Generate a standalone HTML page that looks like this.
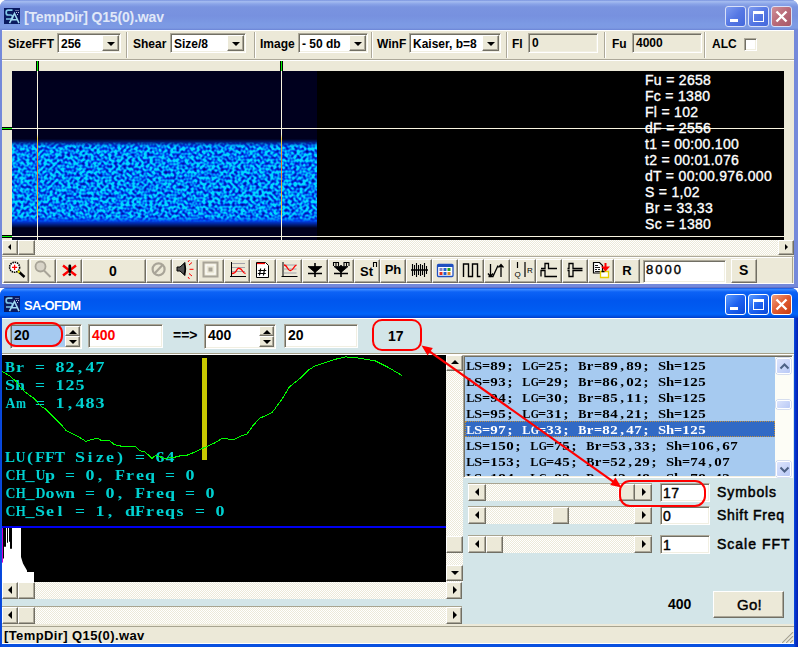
<!DOCTYPE html>
<html><head><meta charset="utf-8"><style>
*{margin:0;padding:0;box-sizing:border-box}
html,body{width:798px;height:647px;overflow:hidden;background:#fff;font-family:"Liberation Sans",sans-serif}
div{position:absolute}
.t{white-space:pre;line-height:1}
.b{font-weight:bold}
.btn{background:#ECE9D8;border-style:solid;border-width:1px;border-color:#fff #716F64 #716F64 #fff;box-shadow:inset -1px -1px #ACA899}
.sunk{border-style:solid;border-width:1px;border-color:#ACA899 #fff #fff #ACA899;box-shadow:inset 1px 1px #716F64, inset -1px -1px #F1EFE2}
.edit{background:#fff}
.dither{background-color:#F4F3EE}
.sepv{width:2px;border-left:1px solid #ACA899;border-right:1px solid #fff}
</style></head>
<body>
<div class="" style="left:0px;top:0px;width:798px;height:288px;background:#7489DA;border-radius:7px 7px 0 0"></div>
<div class="" style="left:0px;top:287px;width:798px;height:1px;background:#6070C8"></div>
<div class="" style="left:0px;top:0px;width:798px;height:30px;border-radius:7px 7px 0 0;background:linear-gradient(#6a85d8 0px,#a3baf0 1px,#a0b8ee 2px,#8aa4e8 4px,#7a94e0 7px,#7791df 16px,#7c9ae4 24px,#7d9ae3 28px,#6b84d6 30px)"></div>
<div style="left:4px;top:8px;width:16px;height:16px;background:#0a1a60"><svg width="16" height="16" viewBox="0 0 16 16"><path d="M8.5 2.2H4.2Q2.2 2.2 2.2 4.2V5Q2.2 7 4.2 7H6.5Q8.5 7 8.5 9V9.2Q8.5 11 6.5 11H2" stroke="#80C8E8" stroke-width="1.7" fill="none"/><path d="M5.5 15.2L10.5 5.5L15 15.2M7.5 11.8H13.2" stroke="#A0D8F0" stroke-width="1.6" fill="none"/><path d="M11.5 2.5h1M13.5 2.5h1M12 4.5h1M14 4.5h1M13 6.5h1" stroke="#C0C0E0" stroke-width="1"/></svg></div>
<div class="t" style="left:24px;top:10px;font-size:14px;color:#E0E8F8;font-weight:bold;letter-spacing:-0.15px">[TempDir] Q15(0).wav</div>
<div style="left:725px;top:6px;width:21px;height:21px;border:1px solid #D8E0F8;border-radius:3px;background:linear-gradient(135deg,#7e9cf0,#5678e4 50%,#4468dc)"><div style="left:4px;top:12px;width:8px;height:3px;background:#fff"></div></div>
<div style="left:748px;top:6px;width:21px;height:21px;border:1px solid #D8E0F8;border-radius:3px;background:linear-gradient(135deg,#7e9cf0,#5678e4 50%,#4468dc)"><div style="left:4px;top:4px;width:11px;height:11px;border:1px solid #fff;border-top-width:3px"></div></div>
<div style="left:771px;top:6px;width:21px;height:21px;border:1px solid #D8E0F8;border-radius:3px;background:linear-gradient(135deg,#d09098,#b86a78 50%,#a85868)"><svg style="position:absolute;left:0;top:0" width="19" height="19"><path d="M4.5 4.5L14.5 14.5M14.5 4.5L4.5 14.5" stroke="#fff" stroke-width="2.4"/></svg></div>
<div class="" style="left:2px;top:30px;width:792px;height:253px;background:#ECE9D8"></div>
<div class="" style="left:2px;top:30px;width:792px;height:1px;background:#fff"></div>
<div class="" style="left:2px;top:59px;width:792px;height:1px;background:#ACA899"></div>
<div class="" style="left:2px;top:60px;width:792px;height:1px;background:#fff"></div>
<div class="t" style="left:8px;top:38px;font-size:12px;color:#000;font-weight:bold">SizeFFT</div>
<div class="sunk edit" style="left:57px;top:33px;width:64px;height:20px"></div>
<div class="t" style="left:61px;top:38px;font-size:12px;color:#000;font-weight:bold">256</div>
<div class="btn" style="left:102px;top:35px;width:17px;height:16px"><div style="left:4px;top:6px;width:0;height:0;border-left:4px solid transparent;border-right:4px solid transparent;border-top:4px solid #000"></div></div>
<div class="sepv" style="left:126px;top:32px;height:26px"></div>
<div class="t" style="left:133px;top:38px;font-size:12px;color:#000;font-weight:bold">Shear</div>
<div class="sunk edit" style="left:170px;top:33px;width:76px;height:20px"></div>
<div class="t" style="left:174px;top:38px;font-size:12px;color:#000;font-weight:bold">Size/8</div>
<div class="btn" style="left:227px;top:35px;width:17px;height:16px"><div style="left:4px;top:6px;width:0;height:0;border-left:4px solid transparent;border-right:4px solid transparent;border-top:4px solid #000"></div></div>
<div class="sepv" style="left:254px;top:32px;height:26px"></div>
<div class="t" style="left:260px;top:38px;font-size:12px;color:#000;font-weight:bold">Image</div>
<div class="sunk edit" style="left:298px;top:33px;width:70px;height:20px"></div>
<div class="t" style="left:302px;top:38px;font-size:12px;color:#000;font-weight:bold">- 50 db</div>
<div class="btn" style="left:349px;top:35px;width:17px;height:16px"><div style="left:4px;top:6px;width:0;height:0;border-left:4px solid transparent;border-right:4px solid transparent;border-top:4px solid #000"></div></div>
<div class="sepv" style="left:371px;top:32px;height:26px"></div>
<div class="t" style="left:377px;top:38px;font-size:12px;color:#000;font-weight:bold">WinF</div>
<div class="sunk edit" style="left:409px;top:33px;width:92px;height:20px"></div>
<div class="t" style="left:413px;top:38px;font-size:12px;color:#000;font-weight:bold">Kaiser, b=8</div>
<div class="btn" style="left:482px;top:35px;width:17px;height:16px"><div style="left:4px;top:6px;width:0;height:0;border-left:4px solid transparent;border-right:4px solid transparent;border-top:4px solid #000"></div></div>
<div class="sepv" style="left:506px;top:32px;height:26px"></div>
<div class="t" style="left:512px;top:38px;font-size:12px;color:#000;font-weight:bold">Fl</div>
<div class="sunk" style="left:528px;top:33px;width:70px;height:20px;background:#ECE9D8"></div>
<div class="t" style="left:532px;top:37px;font-size:12px;color:#000;font-weight:bold">0</div>
<div class="sepv" style="left:604px;top:32px;height:26px"></div>
<div class="t" style="left:612px;top:38px;font-size:12px;color:#000;font-weight:bold">Fu</div>
<div class="sunk" style="left:632px;top:33px;width:70px;height:20px;background:#ECE9D8"></div>
<div class="t" style="left:636px;top:37px;font-size:12px;color:#000;font-weight:bold">4000</div>
<div class="sepv" style="left:704px;top:32px;height:26px"></div>
<div class="t" style="left:712px;top:38px;font-size:12px;color:#000;font-weight:bold">ALC</div>
<div class="sunk edit" style="left:744px;top:38px;width:13px;height:13px"></div>
<div class="" style="left:12px;top:71px;width:772px;height:169px;background:#000"></div>
<div class="" style="left:12px;top:71px;width:305px;height:169px;background:#00001e"></div>
<svg style="position:absolute;left:12px;top:139px" width="305" height="89">
<defs>
<filter id="nzc" x="0" y="0" width="100%" height="100%" color-interpolation-filters="sRGB">
<feTurbulence type="fractalNoise" baseFrequency="0.34" numOctaves="1" seed="7"/>
<feColorMatrix type="matrix" values="0 0 0 0 0  0 0 0 0 0.85  0 0 0 0 1  4.5 0 0 0 -1.85"/>
</filter>
<filter id="nzd" x="0" y="0" width="100%" height="100%" color-interpolation-filters="sRGB">
<feTurbulence type="fractalNoise" baseFrequency="0.34" numOctaves="1" seed="7"/>
<feColorMatrix type="matrix" values="0 0 0 0 0  0 0 0 0 0.05  0 0 0 0 0.55  -4.5 0 0 0 1.9"/>
</filter>
<linearGradient id="vg" x1="0" y1="0" x2="0" y2="1">
<stop offset="0" stop-color="#fff" stop-opacity="0"/>
<stop offset="0.08" stop-color="#fff" stop-opacity="1"/>
<stop offset="0.92" stop-color="#fff" stop-opacity="1"/>
<stop offset="1" stop-color="#fff" stop-opacity="0"/>
</linearGradient>
<linearGradient id="vg2" x1="0" y1="0" x2="0" y2="1">
<stop offset="0.03" stop-color="#fff" stop-opacity="0"/>
<stop offset="0.09" stop-color="#fff" stop-opacity="1"/>
<stop offset="0.875" stop-color="#fff" stop-opacity="1"/>
<stop offset="0.935" stop-color="#fff" stop-opacity="0"/>
</linearGradient>
<mask id="vm"><rect width="305" height="89" fill="url(#vg)"/></mask>
<mask id="vm2"><rect width="305" height="89" fill="url(#vg2)"/></mask>
</defs>
<rect width="305" height="89" fill="#0040F0" mask="url(#vm)"/>
<g mask="url(#vm2)"><rect width="305" height="89" filter="url(#nzd)"/><rect width="305" height="89" filter="url(#nzc)"/></g>
</svg>
<div class="" style="left:36px;top:61px;width:3px;height:10px;background:#000"></div>
<div class="" style="left:280px;top:61px;width:3px;height:10px;background:#000"></div>
<div class="" style="left:37px;top:61px;width:1px;height:10px;background:#00F000"></div>
<div class="" style="left:281px;top:61px;width:1px;height:10px;background:#00F000"></div>
<div class="" style="left:37px;top:71px;width:1px;height:169px;background:linear-gradient(#F8F4E0 0,#F8F4E0 63px,#f0d040 68px,#f08030 90px,#f0c040 140px,#F8F4E0 152px)"></div>
<div class="" style="left:281px;top:71px;width:1px;height:169px;background:linear-gradient(#F8F4E0 0,#F8F4E0 63px,#f0d040 68px,#f08030 90px,#f0c040 140px,#F8F4E0 152px)"></div>
<div class="" style="left:2px;top:127px;width:10px;height:3px;background:#000"></div>
<div class="" style="left:2px;top:235px;width:10px;height:3px;background:#000"></div>
<div class="" style="left:2px;top:128px;width:10px;height:1px;background:#00F000"></div>
<div class="" style="left:2px;top:236px;width:10px;height:1px;background:#00F000"></div>
<div class="" style="left:12px;top:128px;width:772px;height:1px;background:#F8F4E0"></div>
<div class="" style="left:12px;top:236px;width:772px;height:1px;background:#F8F4E0"></div>
<div class="t" style="left:645px;top:73px;font-size:14px;letter-spacing:0.3px;color:#fff;-webkit-text-stroke:0.35px #fff">Fu = 2658</div>
<div class="t" style="left:645px;top:89px;font-size:14px;letter-spacing:0.3px;color:#fff;-webkit-text-stroke:0.35px #fff">Fc = 1380</div>
<div class="t" style="left:645px;top:105px;font-size:14px;letter-spacing:0.3px;color:#fff;-webkit-text-stroke:0.35px #fff">Fl = 102</div>
<div class="t" style="left:645px;top:121px;font-size:14px;letter-spacing:0.3px;color:#fff;-webkit-text-stroke:0.35px #fff">dF = 2556</div>
<div class="t" style="left:645px;top:137px;font-size:14px;letter-spacing:0.3px;color:#fff;-webkit-text-stroke:0.35px #fff">t1 = 00:00.100</div>
<div class="t" style="left:645px;top:153px;font-size:14px;letter-spacing:0.3px;color:#fff;-webkit-text-stroke:0.35px #fff">t2 = 00:01.076</div>
<div class="t" style="left:645px;top:169px;font-size:14px;letter-spacing:0.3px;color:#fff;-webkit-text-stroke:0.35px #fff">dT = 00:00.976.000</div>
<div class="t" style="left:645px;top:185px;font-size:14px;letter-spacing:0.3px;color:#fff;-webkit-text-stroke:0.35px #fff">S = 1,02</div>
<div class="t" style="left:645px;top:201px;font-size:14px;letter-spacing:0.3px;color:#fff;-webkit-text-stroke:0.35px #fff">Br = 33,33</div>
<div class="t" style="left:645px;top:217px;font-size:14px;letter-spacing:0.3px;color:#fff;-webkit-text-stroke:0.35px #fff">Sc = 1380</div>
<div style="left:2px;top:240px;width:792px;height:15px;background-image:repeating-conic-gradient(#ECE9D8 0 25%,#fff 0 50%);background-size:2px 2px"></div>
<div class="btn" style="left:2px;top:240px;width:16px;height:15px"><div style="left:5px;top:3px;width:0;height:0;border-top:3px solid transparent;border-bottom:3px solid transparent;border-right:3px solid #000"></div></div>
<div class="btn" style="left:778px;top:240px;width:16px;height:15px"><div style="left:6px;top:3px;width:0;height:0;border-top:3px solid transparent;border-bottom:3px solid transparent;border-left:3px solid #000"></div></div>
<div class="btn" style="left:18px;top:240px;width:17px;height:15px"></div>
<div class="" style="left:2px;top:256px;width:792px;height:1px;background:#ACA899"></div>
<div class="" style="left:2px;top:257px;width:792px;height:1px;background:#fff"></div>
<div class="btn" style="left:3px;top:259px;width:26px;height:24px"></div>
<div class="btn" style="left:30px;top:259px;width:26px;height:24px"></div>
<div class="btn" style="left:56px;top:259px;width:26px;height:24px"></div>
<div class="btn" style="left:146px;top:259px;width:26px;height:24px"></div>
<div class="btn" style="left:172px;top:259px;width:26px;height:24px"></div>
<div class="btn" style="left:198px;top:259px;width:26px;height:24px"></div>
<div class="btn" style="left:224px;top:259px;width:26px;height:24px"></div>
<div class="btn" style="left:250px;top:259px;width:26px;height:24px"></div>
<div class="btn" style="left:276px;top:259px;width:26px;height:24px"></div>
<div class="btn" style="left:302px;top:259px;width:26px;height:24px"></div>
<div class="btn" style="left:328px;top:259px;width:26px;height:24px"></div>
<div class="btn" style="left:354px;top:259px;width:26px;height:24px"></div>
<div class="btn" style="left:380px;top:259px;width:26px;height:24px"></div>
<div class="btn" style="left:406px;top:259px;width:26px;height:24px"></div>
<div class="btn" style="left:432px;top:259px;width:26px;height:24px"></div>
<div class="btn" style="left:458px;top:259px;width:26px;height:24px"></div>
<div class="btn" style="left:484px;top:259px;width:26px;height:24px"></div>
<div class="btn" style="left:510px;top:259px;width:26px;height:24px"></div>
<div class="btn" style="left:536px;top:259px;width:26px;height:24px"></div>
<div class="btn" style="left:562px;top:259px;width:26px;height:24px"></div>
<div class="btn" style="left:588px;top:259px;width:26px;height:24px"></div>
<div class="btn" style="left:614px;top:259px;width:26px;height:24px"></div>
<div class="btn" style="left:82px;top:259px;width:64px;height:24px"></div>
<div class="t" style="left:109px;top:264px;font-size:14px;color:#000;font-weight:bold">0</div>
<div class="btn" style="left:731px;top:259px;width:26px;height:24px"></div>
<div class="t" style="left:739px;top:263px;font-size:14px;color:#000;font-weight:bold">S</div>
<div class="sunk edit" style="left:643px;top:260px;width:83px;height:23px"></div>
<div class="t" style="left:646px;top:263px;font-size:13px;-webkit-text-stroke:0.4px #000;letter-spacing:2px">8000</div>
<div class="" style="left:2px;top:283px;width:792px;height:1px;background:#fff"></div>
<div class="" style="left:792px;top:257px;width:1px;height:26px;background:#A8A490"></div>
<svg style="position:absolute;left:0;top:0" width="798" height="290">
<g fill="none">
<circle cx="14.6" cy="267.3" r="5" fill="#fff" stroke="#000" stroke-width="1.6" stroke-dasharray="1.5 0.8"/>
<path d="M12 267.3h5.2M14.6 264.7v5.2" stroke="#f00" stroke-width="1.3"/>
<path d="M18 271l6.5 6" stroke="#000" stroke-width="2.4"/>
<path d="M18 271l1.6 1.5" stroke="#ff0" stroke-width="2"/>
<circle cx="40.5" cy="266.5" r="5" fill="#d8d4c8" stroke="#A8A498" stroke-width="1.8"/>
<path d="M44 270.5l6.5 6.5" stroke="#A8A498" stroke-width="2"/>
<path d="M63 265.5l13 10M76 265.5l-13 10" stroke="#f00" stroke-width="2.4"/>
<path d="M69.8 266v5.5" stroke="#000" stroke-width="2.8" stroke-linecap="round"/>
<circle cx="69.8" cy="274.5" r="1.3" fill="#000"/>
<circle cx="158.6" cy="269.3" r="6" stroke="#A8A498" stroke-width="2.2"/>
<path d="M162.5 265l-8 8.5" stroke="#A8A498" stroke-width="2.2"/>
<path d="M177 267h3l5-4.5v13l-5-4.5h-3z" fill="#555" stroke="#000" stroke-width="1"/>
<path d="M184 263.5q3 5.5 0 11" stroke="#000" stroke-width="1.4"/>
<path d="M189 265l3-2.5M189.5 269.3h4M189 273.5l3 2.5M188 262l1.5-2M188 277l1.5 2" stroke="#f00" stroke-width="1"/>
<rect x="203.5" y="262.5" width="14" height="14" stroke="#A8A498" stroke-width="2"/>
<rect x="206" y="265" width="9" height="9" stroke="#fff" stroke-width="1"/>
<rect x="208.5" y="267.5" width="4" height="4" fill="#A8A498"/>
<path d="M231.5 262v15M230 276.5h16" stroke="#000" stroke-width="1"/>
<path d="M232 263.5h13M232 267.5h13M232 271.5h13" stroke="#9090a0" stroke-width="0.8"/>
<path d="M232 273.5q3 0 4.5-3t3-2q1.5 0 3 2.5t3 2.5" stroke="#f00" stroke-width="1.3"/>
<path d="M256.5 262.5h9l3 3v12h-12z" fill="#fff" stroke="#000" stroke-width="1"/>
<path d="M257 263.5h8" stroke="#f00" stroke-width="1.3"/>
<path d="M260 268.5v7M264 268.5v7M258 270.5h8M258 273.5h8" stroke="#000" stroke-width="1.2" transform="skewX(-10) translate(48 0)"/>
<path d="M283 262v15M281.5 276.5h16" stroke="#000" stroke-width="1"/>
<path d="M283.5 265h13M283.5 269h13M283.5 273h13" stroke="#9090a0" stroke-width="0.8"/>
<path d="M284 265q2 0 3.5 3t3 2.5q1.5 0 3-2.5t3-3" stroke="#f00" stroke-width="1.3"/>
<path d="M308 273.5h14M315 263v14" stroke="#000" stroke-width="1.6"/>
<path d="M308 266.5h14l-7 6z" fill="#000" stroke="#000" stroke-width="0.8"/>
<path d="M334 273.5h14M341 265v12" stroke="#000" stroke-width="1.6"/>
<path d="M334 266.5h14l-7 6z" fill="#000" stroke="#000" stroke-width="0.8"/>
<path d="M333.5 266v-3.5h2.5v3.5M336 262.5h2.5v3.5M344 266v-3.5h2.5v3.5M346.5 262.5h2.5v3.5" stroke="#000" stroke-width="1.1"/>
<path d="M411 270h17" stroke="#000" stroke-width="1.5"/>
<path d="M412.5 264v12M414.5 265v10M416.5 263v14M418.5 265v10M420.5 264v12M422.5 265v10M424.5 263v14M426.5 266v8" stroke="#000" stroke-width="1.1"/>
<rect x="437.5" y="264.5" width="15.5" height="12" rx="1" fill="#fff" stroke="#2050c0" stroke-width="1.3"/>
<path d="M437.5 266h15.5" stroke="#2050c0" stroke-width="2"/>
<rect x="439.5" y="268" width="3" height="3" fill="#8080c0"/><rect x="443.5" y="268" width="3" height="3" fill="#2060d0"/><rect x="447.5" y="268" width="3" height="3" fill="#20a020"/>
<rect x="439.5" y="272" width="3" height="3" fill="#e03020"/><rect x="443.5" y="272" width="3" height="3" fill="#2060d0"/><rect x="447.5" y="272" width="3" height="3" fill="#e08020"/>
<path d="M463.5 277v-13h5v12.5h4v-12.5h5v12.5h3" stroke="#000" stroke-width="1.4"/>
<path d="M490.5 264v12M488 273.5l2.5 3l2.5-3M493 276.5l5-11M501 265v12M498.5 267.5l2.5-3l2.5 3M488.5 276.5h5" stroke="#000" stroke-width="1.3"/>
<path d="M517.5 262v6M525 262v15" stroke="#000" stroke-width="1.2"/>
<text x="514.5" y="276.5" font-family="Liberation Sans" font-size="8" fill="#000">Q</text>
<text x="527" y="273" font-family="Liberation Sans" font-size="8" fill="#000">R</text>
<path d="M541 268.5H545V263.5H548.5V268.5H557M541 276.5V270.5H545V276.5H557" stroke="#000" stroke-width="1.3"/>
<path d="M567.5 268.5H569V263.5H573V268.5H582.5M567.5 270.5H569V276.5H573V270.5H582.5" stroke="#000" stroke-width="1.3"/>
<path d="M593.5 262.5h6l3 3v7.5h-9z" fill="#fff" stroke="#000" stroke-width="1.2"/>
<path d="M595 265.5h3M595 267.5h5M595 269.5h2M598 269.5h2M595 271.5h5" stroke="#000" stroke-width="0.9"/>
<path d="M600.5 271.5h8v6h-8z" fill="#fff" stroke="#e8d000" stroke-width="1.3"/>
<path d="M601.5 271.5h3" stroke="#000" stroke-width="1.5"/>
<path d="M605.5 263v4" stroke="#f00" stroke-width="2"/><path d="M601 266.5h9l-4.5 5z" fill="#f00"/>
</g>
<text x="366.5" y="275.5" font-family="Liberation Sans" font-size="13" font-weight="bold" fill="#000" text-anchor="middle">St</text>
<path d="M373.5 267v-4.5h3v4.5" stroke="#000" stroke-width="1.1" fill="none"/>
<text x="393" y="274" font-family="Liberation Sans" font-size="13" font-weight="bold" fill="#000" text-anchor="middle">Ph</text>
<text x="627" y="275" font-family="Liberation Sans" font-size="13" font-weight="bold" fill="#000" text-anchor="middle">R</text>
</svg>
<div class="" style="left:0px;top:288px;width:798px;height:359px;background:linear-gradient(90deg,#0840d8 0,#0850e0 2px,#0850e0 794px,#0838d0 795px,#0020b0 798px);border-radius:7px 7px 0 0"></div>
<div class="" style="left:0px;top:288px;width:798px;height:30px;border-radius:7px 7px 0 0;background:linear-gradient(#0040d0 0px,#3d8cff 1px,#3080ff 2px,#0c62f6 4px,#0056ee 12px,#005cf2 22px,#0064fa 26px,#0054e6 28px,#003cc8 30px)"></div>
<div style="left:4px;top:296px;width:16px;height:16px;background:#0a1a60"><svg width="16" height="16" viewBox="0 0 16 16"><path d="M8.5 2.2H4.2Q2.2 2.2 2.2 4.2V5Q2.2 7 4.2 7H6.5Q8.5 7 8.5 9V9.2Q8.5 11 6.5 11H2" stroke="#80C8E8" stroke-width="1.7" fill="none"/><path d="M5.5 15.2L10.5 5.5L15 15.2M7.5 11.8H13.2" stroke="#A0D8F0" stroke-width="1.6" fill="none"/><path d="M11.5 2.5h1M13.5 2.5h1M12 4.5h1M14 4.5h1M13 6.5h1" stroke="#C0C0E0" stroke-width="1"/></svg></div>
<div class="t" style="left:24px;top:299px;font-size:13px;color:#fff;font-weight:bold;letter-spacing:-0.6px">SA-OFDM</div>
<div style="left:725px;top:294px;width:21px;height:21px;border:1px solid #fff;border-radius:3px;background:linear-gradient(135deg,#5c9cff,#1e62f0 50%,#0a48d8)"><div style="left:4px;top:12px;width:8px;height:3px;background:#fff"></div></div>
<div style="left:748px;top:294px;width:21px;height:21px;border:1px solid #fff;border-radius:3px;background:linear-gradient(135deg,#5c9cff,#1e62f0 50%,#0a48d8)"><div style="left:4px;top:4px;width:11px;height:11px;border:1px solid #fff;border-top-width:3px"></div></div>
<div style="left:771px;top:294px;width:21px;height:21px;border:1px solid #fff;border-radius:3px;background:linear-gradient(135deg,#f0a080,#e05a30 50%,#c83c10)"><svg style="position:absolute;left:0;top:0" width="19" height="19"><path d="M4.5 4.5L14.5 14.5M14.5 4.5L4.5 14.5" stroke="#fff" stroke-width="2.4"/></svg></div>
<div class="" style="left:2px;top:318px;width:792px;height:325px;background:#D3E5E8"></div>
<div class="" style="left:2px;top:318px;width:792px;height:1px;background:#fff"></div>
<div class="" style="left:2px;top:353px;width:792px;height:1px;background:#A59F88"></div>
<div class="" style="left:2px;top:354px;width:792px;height:1px;background:#fff"></div>
<div class="sunk" style="left:10px;top:324px;width:72px;height:25px;background:#A6CAF0"></div>
<div class="t" style="left:14px;top:328px;font-size:14px;color:#000;font-weight:bold">20</div>
<div class="btn" style="left:65px;top:326px;width:15px;height:10px"><div style="left:3px;top:3px;width:0;height:0;border-left:4px solid transparent;border-right:4px solid transparent;border-bottom:4px solid #000"></div></div>
<div class="btn" style="left:65px;top:336px;width:15px;height:11px"><div style="left:3px;top:3px;width:0;height:0;border-left:4px solid transparent;border-right:4px solid transparent;border-top:4px solid #000"></div></div>
<div class="sunk edit" style="left:88px;top:324px;width:75px;height:24px"></div>
<div class="t" style="left:92px;top:328px;font-size:14px;color:#f00;font-weight:bold">400</div>
<div class="t" style="left:173px;top:328px;font-size:14px;color:#000;font-weight:bold">==></div>
<div class="sunk" style="left:204px;top:324px;width:72px;height:25px;background:#fff"></div>
<div class="t" style="left:208px;top:328px;font-size:14px;color:#000;font-weight:bold">400</div>
<div class="btn" style="left:259px;top:326px;width:15px;height:10px"><div style="left:3px;top:3px;width:0;height:0;border-left:4px solid transparent;border-right:4px solid transparent;border-bottom:4px solid #000"></div></div>
<div class="btn" style="left:259px;top:336px;width:15px;height:11px"><div style="left:3px;top:3px;width:0;height:0;border-left:4px solid transparent;border-right:4px solid transparent;border-top:4px solid #000"></div></div>
<div class="sunk edit" style="left:284px;top:324px;width:74px;height:24px"></div>
<div class="t" style="left:288px;top:328px;font-size:14px;color:#000;font-weight:bold">20</div>
<div class="t" style="left:388px;top:329px;font-size:14px;color:#000;font-weight:bold">17</div>
<div class="" style="left:2px;top:355px;width:444px;height:227px;background:#000"></div>
<div style="left:5px;top:360px;white-space:nowrap;line-height:1;font-size:15px;font-family:'Liberation Serif',serif;font-weight:bold;color:#00D0D0"><span style="display:inline-block;width:10px;text-align:center;transform:scaleX(1.00)">B</span><span style="display:inline-block;width:10px;text-align:center;transform:scaleX(1.20)">r</span><span style="display:inline-block;width:10px"></span><span style="display:inline-block;width:10px;text-align:center;transform:scaleX(1.17)">=</span><span style="display:inline-block;width:10px"></span><span style="display:inline-block;width:10px;text-align:center;transform:scaleX(1.20)">8</span><span style="display:inline-block;width:10px;text-align:center;transform:scaleX(1.20)">2</span><span style="display:inline-block;width:10px;text-align:center;transform:scaleX(1.20)">,</span><span style="display:inline-block;width:10px;text-align:center;transform:scaleX(1.20)">4</span><span style="display:inline-block;width:10px;text-align:center;transform:scaleX(1.20)">7</span></div>
<div style="left:5px;top:378px;white-space:nowrap;line-height:1;font-size:15px;font-family:'Liberation Serif',serif;font-weight:bold;color:#00D0D0"><span style="display:inline-block;width:10px;text-align:center;transform:scaleX(1.20)">S</span><span style="display:inline-block;width:10px;text-align:center;transform:scaleX(1.20)">h</span><span style="display:inline-block;width:10px"></span><span style="display:inline-block;width:10px;text-align:center;transform:scaleX(1.17)">=</span><span style="display:inline-block;width:10px"></span><span style="display:inline-block;width:10px;text-align:center;transform:scaleX(1.20)">1</span><span style="display:inline-block;width:10px;text-align:center;transform:scaleX(1.20)">2</span><span style="display:inline-block;width:10px;text-align:center;transform:scaleX(1.20)">5</span></div>
<div style="left:5px;top:396px;white-space:nowrap;line-height:1;font-size:15px;font-family:'Liberation Serif',serif;font-weight:bold;color:#00D0D0"><span style="display:inline-block;width:10px;text-align:center;transform:scaleX(0.92)">A</span><span style="display:inline-block;width:10px;text-align:center;transform:scaleX(0.80)">m</span><span style="display:inline-block;width:10px"></span><span style="display:inline-block;width:10px;text-align:center;transform:scaleX(1.17)">=</span><span style="display:inline-block;width:10px"></span><span style="display:inline-block;width:10px;text-align:center;transform:scaleX(1.20)">1</span><span style="display:inline-block;width:10px;text-align:center;transform:scaleX(1.20)">,</span><span style="display:inline-block;width:10px;text-align:center;transform:scaleX(1.20)">4</span><span style="display:inline-block;width:10px;text-align:center;transform:scaleX(1.20)">8</span><span style="display:inline-block;width:10px;text-align:center;transform:scaleX(1.20)">3</span></div>
<div style="left:5px;top:450px;white-space:nowrap;line-height:1;font-size:15px;font-family:'Liberation Serif',serif;font-weight:bold;color:#00D0D0"><span style="display:inline-block;width:10px;text-align:center;transform:scaleX(1.00)">L</span><span style="display:inline-block;width:10px;text-align:center;transform:scaleX(0.92)">U</span><span style="display:inline-block;width:10px;text-align:center;transform:scaleX(1.20)">(</span><span style="display:inline-block;width:10px;text-align:center;transform:scaleX(1.09)">F</span><span style="display:inline-block;width:10px;text-align:center;transform:scaleX(1.09)">F</span><span style="display:inline-block;width:10px;text-align:center;transform:scaleX(1.00)">T</span><span style="display:inline-block;width:10px"></span><span style="display:inline-block;width:10px;text-align:center;transform:scaleX(1.20)">S</span><span style="display:inline-block;width:10px;text-align:center;transform:scaleX(1.20)">i</span><span style="display:inline-block;width:10px;text-align:center;transform:scaleX(1.20)">z</span><span style="display:inline-block;width:10px;text-align:center;transform:scaleX(1.20)">e</span><span style="display:inline-block;width:10px;text-align:center;transform:scaleX(1.20)">)</span><span style="display:inline-block;width:10px"></span><span style="display:inline-block;width:10px;text-align:center;transform:scaleX(1.17)">=</span><span style="display:inline-block;width:10px"></span><span style="display:inline-block;width:10px;text-align:center;transform:scaleX(1.20)">6</span><span style="display:inline-block;width:10px;text-align:center;transform:scaleX(1.20)">4</span></div>
<div style="left:5px;top:468px;white-space:nowrap;line-height:1;font-size:15px;font-family:'Liberation Serif',serif;font-weight:bold;color:#00D0D0"><span style="display:inline-block;width:10px;text-align:center;transform:scaleX(0.92)">C</span><span style="display:inline-block;width:10px;text-align:center;transform:scaleX(0.86)">H</span><span style="display:inline-block;width:10px;text-align:center;transform:scaleX(1.20)">_</span><span style="display:inline-block;width:10px;text-align:center;transform:scaleX(0.92)">U</span><span style="display:inline-block;width:10px;text-align:center;transform:scaleX(1.20)">p</span><span style="display:inline-block;width:10px"></span><span style="display:inline-block;width:10px;text-align:center;transform:scaleX(1.17)">=</span><span style="display:inline-block;width:10px"></span><span style="display:inline-block;width:10px;text-align:center;transform:scaleX(1.20)">0</span><span style="display:inline-block;width:10px;text-align:center;transform:scaleX(1.20)">,</span><span style="display:inline-block;width:10px"></span><span style="display:inline-block;width:10px;text-align:center;transform:scaleX(1.09)">F</span><span style="display:inline-block;width:10px;text-align:center;transform:scaleX(1.20)">r</span><span style="display:inline-block;width:10px;text-align:center;transform:scaleX(1.20)">e</span><span style="display:inline-block;width:10px;text-align:center;transform:scaleX(1.20)">q</span><span style="display:inline-block;width:10px"></span><span style="display:inline-block;width:10px;text-align:center;transform:scaleX(1.17)">=</span><span style="display:inline-block;width:10px"></span><span style="display:inline-block;width:10px;text-align:center;transform:scaleX(1.20)">0</span></div>
<div style="left:5px;top:486px;white-space:nowrap;line-height:1;font-size:15px;font-family:'Liberation Serif',serif;font-weight:bold;color:#00D0D0"><span style="display:inline-block;width:10px;text-align:center;transform:scaleX(0.92)">C</span><span style="display:inline-block;width:10px;text-align:center;transform:scaleX(0.86)">H</span><span style="display:inline-block;width:10px;text-align:center;transform:scaleX(1.20)">_</span><span style="display:inline-block;width:10px;text-align:center;transform:scaleX(0.92)">D</span><span style="display:inline-block;width:10px;text-align:center;transform:scaleX(1.20)">o</span><span style="display:inline-block;width:10px;text-align:center;transform:scaleX(0.92)">w</span><span style="display:inline-block;width:10px;text-align:center;transform:scaleX(1.20)">n</span><span style="display:inline-block;width:10px"></span><span style="display:inline-block;width:10px;text-align:center;transform:scaleX(1.17)">=</span><span style="display:inline-block;width:10px"></span><span style="display:inline-block;width:10px;text-align:center;transform:scaleX(1.20)">0</span><span style="display:inline-block;width:10px;text-align:center;transform:scaleX(1.20)">,</span><span style="display:inline-block;width:10px"></span><span style="display:inline-block;width:10px;text-align:center;transform:scaleX(1.09)">F</span><span style="display:inline-block;width:10px;text-align:center;transform:scaleX(1.20)">r</span><span style="display:inline-block;width:10px;text-align:center;transform:scaleX(1.20)">e</span><span style="display:inline-block;width:10px;text-align:center;transform:scaleX(1.20)">q</span><span style="display:inline-block;width:10px"></span><span style="display:inline-block;width:10px;text-align:center;transform:scaleX(1.17)">=</span><span style="display:inline-block;width:10px"></span><span style="display:inline-block;width:10px;text-align:center;transform:scaleX(1.20)">0</span></div>
<div style="left:5px;top:504px;white-space:nowrap;line-height:1;font-size:15px;font-family:'Liberation Serif',serif;font-weight:bold;color:#00D0D0"><span style="display:inline-block;width:10px;text-align:center;transform:scaleX(0.92)">C</span><span style="display:inline-block;width:10px;text-align:center;transform:scaleX(0.86)">H</span><span style="display:inline-block;width:10px;text-align:center;transform:scaleX(1.20)">_</span><span style="display:inline-block;width:10px;text-align:center;transform:scaleX(1.20)">S</span><span style="display:inline-block;width:10px;text-align:center;transform:scaleX(1.20)">e</span><span style="display:inline-block;width:10px;text-align:center;transform:scaleX(1.20)">l</span><span style="display:inline-block;width:10px"></span><span style="display:inline-block;width:10px;text-align:center;transform:scaleX(1.17)">=</span><span style="display:inline-block;width:10px"></span><span style="display:inline-block;width:10px;text-align:center;transform:scaleX(1.20)">1</span><span style="display:inline-block;width:10px;text-align:center;transform:scaleX(1.20)">,</span><span style="display:inline-block;width:10px"></span><span style="display:inline-block;width:10px;text-align:center;transform:scaleX(1.20)">d</span><span style="display:inline-block;width:10px;text-align:center;transform:scaleX(1.09)">F</span><span style="display:inline-block;width:10px;text-align:center;transform:scaleX(1.20)">r</span><span style="display:inline-block;width:10px;text-align:center;transform:scaleX(1.20)">e</span><span style="display:inline-block;width:10px;text-align:center;transform:scaleX(1.20)">q</span><span style="display:inline-block;width:10px;text-align:center;transform:scaleX(1.20)">s</span><span style="display:inline-block;width:10px"></span><span style="display:inline-block;width:10px;text-align:center;transform:scaleX(1.17)">=</span><span style="display:inline-block;width:10px"></span><span style="display:inline-block;width:10px;text-align:center;transform:scaleX(1.20)">0</span></div>
<div class="" style="left:202px;top:358px;width:5px;height:102px;background:#C8C800"></div>
<svg style="position:absolute;left:0;top:0" width="798" height="647"><polyline points="1.7,371.2 10.2,376.3 17,382.2 20.4,387.3 25.5,392.4 34,398.4 40.8,406 46,409.4 54.4,418 61.2,424.7 66.3,430.7 78.2,436.6 85.9,441.4 92.7,439.2 97.8,438.3 102,440.9 107,440.4 110,441 114.5,444.8 122,446.3 135.6,446.3 140,450.8 144.6,451.6 152,458.3 155.9,455.3 164,458.3 173.2,457.6 182.2,455.3 186.7,455.3 194.2,452.3 200.2,449.3 206.2,447 215.3,442.6 222.8,438 225.8,438.3 230,439.5 234.5,439.3 240.8,436.2 247,434 253.3,425.2 259.6,418.3 272,412.7 281.5,400 289.3,387 300.3,378.2 308,370.4 314.4,366.3 325.4,362.5 334.8,359.4 345.8,356.9 356.7,357.8 375.5,361 388,367.2 402.2,375.7" fill="none" stroke="#00FF00" stroke-width="1" shape-rendering="crispEdges"/></svg>
<div class="" style="left:2px;top:526px;width:444px;height:2px;background:#0000F0"></div>
<svg style="position:absolute;left:2px;top:528px" width="40" height="54"><path d="M0 54V30.6H2V18.7H4V0H5V14.8H6V0H7V13.8H8V20.7H10V0H19V29L21 35.6L25 42.5V44H32V54Z" fill="#fff"/><path d="M0.5 0V34.6" stroke="#d000d0" stroke-width="1"/></svg>
<div style="left:446px;top:355px;width:17px;height:227px;background-image:repeating-conic-gradient(#ECE9D8 0 25%,#fff 0 50%);background-size:2px 2px"></div>
<div class="btn" style="left:446px;top:355px;width:17px;height:16px"><div style="left:4px;top:4px;width:0;height:0;border-left:4px solid transparent;border-right:4px solid transparent;border-bottom:4px solid #000"></div></div>
<div class="btn" style="left:446px;top:565px;width:17px;height:16px"><div style="left:4px;top:5px;width:0;height:0;border-left:4px solid transparent;border-right:4px solid transparent;border-top:4px solid #000"></div></div>
<div class="btn" style="left:446px;top:536px;width:17px;height:17px"></div>
<div style="left:2px;top:582px;width:460px;height:17px;background-image:repeating-conic-gradient(#ECE9D8 0 25%,#fff 0 50%);background-size:2px 2px"></div>
<div class="btn" style="left:2px;top:582px;width:16px;height:17px"><div style="left:5px;top:3px;width:0;height:0;border-top:4px solid transparent;border-bottom:4px solid transparent;border-right:4px solid #000"></div></div>
<div class="btn" style="left:446px;top:582px;width:16px;height:17px"><div style="left:6px;top:3px;width:0;height:0;border-top:4px solid transparent;border-bottom:4px solid transparent;border-left:4px solid #000"></div></div>
<div class="btn" style="left:18px;top:582px;width:17px;height:17px"></div>
<div class="" style="left:2px;top:606px;width:460px;height:1px;background:#A8A490"></div>
<div style="left:2px;top:607px;width:460px;height:17px;background-image:repeating-conic-gradient(#ECE9D8 0 25%,#fff 0 50%);background-size:2px 2px"></div>
<div class="btn" style="left:2px;top:607px;width:16px;height:17px"><div style="left:5px;top:3px;width:0;height:0;border-top:4px solid transparent;border-bottom:4px solid transparent;border-right:4px solid #000"></div></div>
<div class="btn" style="left:446px;top:607px;width:16px;height:17px"><div style="left:6px;top:3px;width:0;height:0;border-top:4px solid transparent;border-bottom:4px solid transparent;border-left:4px solid #000"></div></div>
<div class="btn" style="left:18px;top:607px;width:17px;height:17px"></div>
<div class="sunk" style="left:463px;top:355px;width:330px;height:123px;background:#A6CAF0"></div>
<div class="" style="left:465px;top:421px;width:310px;height:16px;background:#316AC5;outline:1px dotted #C09040;outline-offset:-1px"></div>
<div style="left:465px;top:357px;width:310px;height:119px;overflow:hidden">
<div style="left:1px;top:2px;white-space:nowrap;line-height:1;font-size:13px;font-family:'Liberation Serif',serif;font-weight:bold;color:#000"><span style="display:inline-block;width:8px;text-align:center;transform:scaleX(0.94)">L</span><span style="display:inline-block;width:8px;text-align:center;transform:scaleX(1.13)">S</span><span style="display:inline-block;width:8px;text-align:center;transform:scaleX(1.10)">=</span><span style="display:inline-block;width:8px;text-align:center;transform:scaleX(1.15)">8</span><span style="display:inline-block;width:8px;text-align:center;transform:scaleX(1.15)">9</span><span style="display:inline-block;width:8px;text-align:center;transform:scaleX(1.15)">;</span><span style="display:inline-block;width:8px"></span><span style="display:inline-block;width:8px;text-align:center;transform:scaleX(0.94)">L</span><span style="display:inline-block;width:8px;text-align:center;transform:scaleX(0.81)">G</span><span style="display:inline-block;width:8px;text-align:center;transform:scaleX(1.10)">=</span><span style="display:inline-block;width:8px;text-align:center;transform:scaleX(1.15)">2</span><span style="display:inline-block;width:8px;text-align:center;transform:scaleX(1.15)">5</span><span style="display:inline-block;width:8px;text-align:center;transform:scaleX(1.15)">;</span><span style="display:inline-block;width:8px"></span><span style="display:inline-block;width:8px;text-align:center;transform:scaleX(0.94)">B</span><span style="display:inline-block;width:8px;text-align:center;transform:scaleX(1.15)">r</span><span style="display:inline-block;width:8px;text-align:center;transform:scaleX(1.10)">=</span><span style="display:inline-block;width:8px;text-align:center;transform:scaleX(1.15)">8</span><span style="display:inline-block;width:8px;text-align:center;transform:scaleX(1.15)">9</span><span style="display:inline-block;width:8px;text-align:center;transform:scaleX(1.15)">,</span><span style="display:inline-block;width:8px;text-align:center;transform:scaleX(1.15)">8</span><span style="display:inline-block;width:8px;text-align:center;transform:scaleX(1.15)">9</span><span style="display:inline-block;width:8px;text-align:center;transform:scaleX(1.15)">;</span><span style="display:inline-block;width:8px"></span><span style="display:inline-block;width:8px;text-align:center;transform:scaleX(1.13)">S</span><span style="display:inline-block;width:8px;text-align:center;transform:scaleX(1.13)">h</span><span style="display:inline-block;width:8px;text-align:center;transform:scaleX(1.10)">=</span><span style="display:inline-block;width:8px;text-align:center;transform:scaleX(1.15)">1</span><span style="display:inline-block;width:8px;text-align:center;transform:scaleX(1.15)">2</span><span style="display:inline-block;width:8px;text-align:center;transform:scaleX(1.15)">5</span></div>
<div style="left:1px;top:18px;white-space:nowrap;line-height:1;font-size:13px;font-family:'Liberation Serif',serif;font-weight:bold;color:#000"><span style="display:inline-block;width:8px;text-align:center;transform:scaleX(0.94)">L</span><span style="display:inline-block;width:8px;text-align:center;transform:scaleX(1.13)">S</span><span style="display:inline-block;width:8px;text-align:center;transform:scaleX(1.10)">=</span><span style="display:inline-block;width:8px;text-align:center;transform:scaleX(1.15)">9</span><span style="display:inline-block;width:8px;text-align:center;transform:scaleX(1.15)">3</span><span style="display:inline-block;width:8px;text-align:center;transform:scaleX(1.15)">;</span><span style="display:inline-block;width:8px"></span><span style="display:inline-block;width:8px;text-align:center;transform:scaleX(0.94)">L</span><span style="display:inline-block;width:8px;text-align:center;transform:scaleX(0.81)">G</span><span style="display:inline-block;width:8px;text-align:center;transform:scaleX(1.10)">=</span><span style="display:inline-block;width:8px;text-align:center;transform:scaleX(1.15)">2</span><span style="display:inline-block;width:8px;text-align:center;transform:scaleX(1.15)">9</span><span style="display:inline-block;width:8px;text-align:center;transform:scaleX(1.15)">;</span><span style="display:inline-block;width:8px"></span><span style="display:inline-block;width:8px;text-align:center;transform:scaleX(0.94)">B</span><span style="display:inline-block;width:8px;text-align:center;transform:scaleX(1.15)">r</span><span style="display:inline-block;width:8px;text-align:center;transform:scaleX(1.10)">=</span><span style="display:inline-block;width:8px;text-align:center;transform:scaleX(1.15)">8</span><span style="display:inline-block;width:8px;text-align:center;transform:scaleX(1.15)">6</span><span style="display:inline-block;width:8px;text-align:center;transform:scaleX(1.15)">,</span><span style="display:inline-block;width:8px;text-align:center;transform:scaleX(1.15)">0</span><span style="display:inline-block;width:8px;text-align:center;transform:scaleX(1.15)">2</span><span style="display:inline-block;width:8px;text-align:center;transform:scaleX(1.15)">;</span><span style="display:inline-block;width:8px"></span><span style="display:inline-block;width:8px;text-align:center;transform:scaleX(1.13)">S</span><span style="display:inline-block;width:8px;text-align:center;transform:scaleX(1.13)">h</span><span style="display:inline-block;width:8px;text-align:center;transform:scaleX(1.10)">=</span><span style="display:inline-block;width:8px;text-align:center;transform:scaleX(1.15)">1</span><span style="display:inline-block;width:8px;text-align:center;transform:scaleX(1.15)">2</span><span style="display:inline-block;width:8px;text-align:center;transform:scaleX(1.15)">5</span></div>
<div style="left:1px;top:34px;white-space:nowrap;line-height:1;font-size:13px;font-family:'Liberation Serif',serif;font-weight:bold;color:#000"><span style="display:inline-block;width:8px;text-align:center;transform:scaleX(0.94)">L</span><span style="display:inline-block;width:8px;text-align:center;transform:scaleX(1.13)">S</span><span style="display:inline-block;width:8px;text-align:center;transform:scaleX(1.10)">=</span><span style="display:inline-block;width:8px;text-align:center;transform:scaleX(1.15)">9</span><span style="display:inline-block;width:8px;text-align:center;transform:scaleX(1.15)">4</span><span style="display:inline-block;width:8px;text-align:center;transform:scaleX(1.15)">;</span><span style="display:inline-block;width:8px"></span><span style="display:inline-block;width:8px;text-align:center;transform:scaleX(0.94)">L</span><span style="display:inline-block;width:8px;text-align:center;transform:scaleX(0.81)">G</span><span style="display:inline-block;width:8px;text-align:center;transform:scaleX(1.10)">=</span><span style="display:inline-block;width:8px;text-align:center;transform:scaleX(1.15)">3</span><span style="display:inline-block;width:8px;text-align:center;transform:scaleX(1.15)">0</span><span style="display:inline-block;width:8px;text-align:center;transform:scaleX(1.15)">;</span><span style="display:inline-block;width:8px"></span><span style="display:inline-block;width:8px;text-align:center;transform:scaleX(0.94)">B</span><span style="display:inline-block;width:8px;text-align:center;transform:scaleX(1.15)">r</span><span style="display:inline-block;width:8px;text-align:center;transform:scaleX(1.10)">=</span><span style="display:inline-block;width:8px;text-align:center;transform:scaleX(1.15)">8</span><span style="display:inline-block;width:8px;text-align:center;transform:scaleX(1.15)">5</span><span style="display:inline-block;width:8px;text-align:center;transform:scaleX(1.15)">,</span><span style="display:inline-block;width:8px;text-align:center;transform:scaleX(1.15)">1</span><span style="display:inline-block;width:8px;text-align:center;transform:scaleX(1.15)">1</span><span style="display:inline-block;width:8px;text-align:center;transform:scaleX(1.15)">;</span><span style="display:inline-block;width:8px"></span><span style="display:inline-block;width:8px;text-align:center;transform:scaleX(1.13)">S</span><span style="display:inline-block;width:8px;text-align:center;transform:scaleX(1.13)">h</span><span style="display:inline-block;width:8px;text-align:center;transform:scaleX(1.10)">=</span><span style="display:inline-block;width:8px;text-align:center;transform:scaleX(1.15)">1</span><span style="display:inline-block;width:8px;text-align:center;transform:scaleX(1.15)">2</span><span style="display:inline-block;width:8px;text-align:center;transform:scaleX(1.15)">5</span></div>
<div style="left:1px;top:50px;white-space:nowrap;line-height:1;font-size:13px;font-family:'Liberation Serif',serif;font-weight:bold;color:#000"><span style="display:inline-block;width:8px;text-align:center;transform:scaleX(0.94)">L</span><span style="display:inline-block;width:8px;text-align:center;transform:scaleX(1.13)">S</span><span style="display:inline-block;width:8px;text-align:center;transform:scaleX(1.10)">=</span><span style="display:inline-block;width:8px;text-align:center;transform:scaleX(1.15)">9</span><span style="display:inline-block;width:8px;text-align:center;transform:scaleX(1.15)">5</span><span style="display:inline-block;width:8px;text-align:center;transform:scaleX(1.15)">;</span><span style="display:inline-block;width:8px"></span><span style="display:inline-block;width:8px;text-align:center;transform:scaleX(0.94)">L</span><span style="display:inline-block;width:8px;text-align:center;transform:scaleX(0.81)">G</span><span style="display:inline-block;width:8px;text-align:center;transform:scaleX(1.10)">=</span><span style="display:inline-block;width:8px;text-align:center;transform:scaleX(1.15)">3</span><span style="display:inline-block;width:8px;text-align:center;transform:scaleX(1.15)">1</span><span style="display:inline-block;width:8px;text-align:center;transform:scaleX(1.15)">;</span><span style="display:inline-block;width:8px"></span><span style="display:inline-block;width:8px;text-align:center;transform:scaleX(0.94)">B</span><span style="display:inline-block;width:8px;text-align:center;transform:scaleX(1.15)">r</span><span style="display:inline-block;width:8px;text-align:center;transform:scaleX(1.10)">=</span><span style="display:inline-block;width:8px;text-align:center;transform:scaleX(1.15)">8</span><span style="display:inline-block;width:8px;text-align:center;transform:scaleX(1.15)">4</span><span style="display:inline-block;width:8px;text-align:center;transform:scaleX(1.15)">,</span><span style="display:inline-block;width:8px;text-align:center;transform:scaleX(1.15)">2</span><span style="display:inline-block;width:8px;text-align:center;transform:scaleX(1.15)">1</span><span style="display:inline-block;width:8px;text-align:center;transform:scaleX(1.15)">;</span><span style="display:inline-block;width:8px"></span><span style="display:inline-block;width:8px;text-align:center;transform:scaleX(1.13)">S</span><span style="display:inline-block;width:8px;text-align:center;transform:scaleX(1.13)">h</span><span style="display:inline-block;width:8px;text-align:center;transform:scaleX(1.10)">=</span><span style="display:inline-block;width:8px;text-align:center;transform:scaleX(1.15)">1</span><span style="display:inline-block;width:8px;text-align:center;transform:scaleX(1.15)">2</span><span style="display:inline-block;width:8px;text-align:center;transform:scaleX(1.15)">5</span></div>
<div style="left:1px;top:66px;white-space:nowrap;line-height:1;font-size:13px;font-family:'Liberation Serif',serif;font-weight:bold;color:#fff"><span style="display:inline-block;width:8px;text-align:center;transform:scaleX(0.94)">L</span><span style="display:inline-block;width:8px;text-align:center;transform:scaleX(1.13)">S</span><span style="display:inline-block;width:8px;text-align:center;transform:scaleX(1.10)">=</span><span style="display:inline-block;width:8px;text-align:center;transform:scaleX(1.15)">9</span><span style="display:inline-block;width:8px;text-align:center;transform:scaleX(1.15)">7</span><span style="display:inline-block;width:8px;text-align:center;transform:scaleX(1.15)">;</span><span style="display:inline-block;width:8px"></span><span style="display:inline-block;width:8px;text-align:center;transform:scaleX(0.94)">L</span><span style="display:inline-block;width:8px;text-align:center;transform:scaleX(0.81)">G</span><span style="display:inline-block;width:8px;text-align:center;transform:scaleX(1.10)">=</span><span style="display:inline-block;width:8px;text-align:center;transform:scaleX(1.15)">3</span><span style="display:inline-block;width:8px;text-align:center;transform:scaleX(1.15)">3</span><span style="display:inline-block;width:8px;text-align:center;transform:scaleX(1.15)">;</span><span style="display:inline-block;width:8px"></span><span style="display:inline-block;width:8px;text-align:center;transform:scaleX(0.94)">B</span><span style="display:inline-block;width:8px;text-align:center;transform:scaleX(1.15)">r</span><span style="display:inline-block;width:8px;text-align:center;transform:scaleX(1.10)">=</span><span style="display:inline-block;width:8px;text-align:center;transform:scaleX(1.15)">8</span><span style="display:inline-block;width:8px;text-align:center;transform:scaleX(1.15)">2</span><span style="display:inline-block;width:8px;text-align:center;transform:scaleX(1.15)">,</span><span style="display:inline-block;width:8px;text-align:center;transform:scaleX(1.15)">4</span><span style="display:inline-block;width:8px;text-align:center;transform:scaleX(1.15)">7</span><span style="display:inline-block;width:8px;text-align:center;transform:scaleX(1.15)">;</span><span style="display:inline-block;width:8px"></span><span style="display:inline-block;width:8px;text-align:center;transform:scaleX(1.13)">S</span><span style="display:inline-block;width:8px;text-align:center;transform:scaleX(1.13)">h</span><span style="display:inline-block;width:8px;text-align:center;transform:scaleX(1.10)">=</span><span style="display:inline-block;width:8px;text-align:center;transform:scaleX(1.15)">1</span><span style="display:inline-block;width:8px;text-align:center;transform:scaleX(1.15)">2</span><span style="display:inline-block;width:8px;text-align:center;transform:scaleX(1.15)">5</span></div>
<div style="left:1px;top:82px;white-space:nowrap;line-height:1;font-size:13px;font-family:'Liberation Serif',serif;font-weight:bold;color:#000"><span style="display:inline-block;width:8px;text-align:center;transform:scaleX(0.94)">L</span><span style="display:inline-block;width:8px;text-align:center;transform:scaleX(1.13)">S</span><span style="display:inline-block;width:8px;text-align:center;transform:scaleX(1.10)">=</span><span style="display:inline-block;width:8px;text-align:center;transform:scaleX(1.15)">1</span><span style="display:inline-block;width:8px;text-align:center;transform:scaleX(1.15)">5</span><span style="display:inline-block;width:8px;text-align:center;transform:scaleX(1.15)">0</span><span style="display:inline-block;width:8px;text-align:center;transform:scaleX(1.15)">;</span><span style="display:inline-block;width:8px"></span><span style="display:inline-block;width:8px;text-align:center;transform:scaleX(0.94)">L</span><span style="display:inline-block;width:8px;text-align:center;transform:scaleX(0.81)">G</span><span style="display:inline-block;width:8px;text-align:center;transform:scaleX(1.10)">=</span><span style="display:inline-block;width:8px;text-align:center;transform:scaleX(1.15)">7</span><span style="display:inline-block;width:8px;text-align:center;transform:scaleX(1.15)">5</span><span style="display:inline-block;width:8px;text-align:center;transform:scaleX(1.15)">;</span><span style="display:inline-block;width:8px"></span><span style="display:inline-block;width:8px;text-align:center;transform:scaleX(0.94)">B</span><span style="display:inline-block;width:8px;text-align:center;transform:scaleX(1.15)">r</span><span style="display:inline-block;width:8px;text-align:center;transform:scaleX(1.10)">=</span><span style="display:inline-block;width:8px;text-align:center;transform:scaleX(1.15)">5</span><span style="display:inline-block;width:8px;text-align:center;transform:scaleX(1.15)">3</span><span style="display:inline-block;width:8px;text-align:center;transform:scaleX(1.15)">,</span><span style="display:inline-block;width:8px;text-align:center;transform:scaleX(1.15)">3</span><span style="display:inline-block;width:8px;text-align:center;transform:scaleX(1.15)">3</span><span style="display:inline-block;width:8px;text-align:center;transform:scaleX(1.15)">;</span><span style="display:inline-block;width:8px"></span><span style="display:inline-block;width:8px;text-align:center;transform:scaleX(1.13)">S</span><span style="display:inline-block;width:8px;text-align:center;transform:scaleX(1.13)">h</span><span style="display:inline-block;width:8px;text-align:center;transform:scaleX(1.10)">=</span><span style="display:inline-block;width:8px;text-align:center;transform:scaleX(1.15)">1</span><span style="display:inline-block;width:8px;text-align:center;transform:scaleX(1.15)">0</span><span style="display:inline-block;width:8px;text-align:center;transform:scaleX(1.15)">6</span><span style="display:inline-block;width:8px;text-align:center;transform:scaleX(1.15)">,</span><span style="display:inline-block;width:8px;text-align:center;transform:scaleX(1.15)">6</span><span style="display:inline-block;width:8px;text-align:center;transform:scaleX(1.15)">7</span></div>
<div style="left:1px;top:98px;white-space:nowrap;line-height:1;font-size:13px;font-family:'Liberation Serif',serif;font-weight:bold;color:#000"><span style="display:inline-block;width:8px;text-align:center;transform:scaleX(0.94)">L</span><span style="display:inline-block;width:8px;text-align:center;transform:scaleX(1.13)">S</span><span style="display:inline-block;width:8px;text-align:center;transform:scaleX(1.10)">=</span><span style="display:inline-block;width:8px;text-align:center;transform:scaleX(1.15)">1</span><span style="display:inline-block;width:8px;text-align:center;transform:scaleX(1.15)">5</span><span style="display:inline-block;width:8px;text-align:center;transform:scaleX(1.15)">3</span><span style="display:inline-block;width:8px;text-align:center;transform:scaleX(1.15)">;</span><span style="display:inline-block;width:8px"></span><span style="display:inline-block;width:8px;text-align:center;transform:scaleX(0.94)">L</span><span style="display:inline-block;width:8px;text-align:center;transform:scaleX(0.81)">G</span><span style="display:inline-block;width:8px;text-align:center;transform:scaleX(1.10)">=</span><span style="display:inline-block;width:8px;text-align:center;transform:scaleX(1.15)">4</span><span style="display:inline-block;width:8px;text-align:center;transform:scaleX(1.15)">5</span><span style="display:inline-block;width:8px;text-align:center;transform:scaleX(1.15)">;</span><span style="display:inline-block;width:8px"></span><span style="display:inline-block;width:8px;text-align:center;transform:scaleX(0.94)">B</span><span style="display:inline-block;width:8px;text-align:center;transform:scaleX(1.15)">r</span><span style="display:inline-block;width:8px;text-align:center;transform:scaleX(1.10)">=</span><span style="display:inline-block;width:8px;text-align:center;transform:scaleX(1.15)">5</span><span style="display:inline-block;width:8px;text-align:center;transform:scaleX(1.15)">2</span><span style="display:inline-block;width:8px;text-align:center;transform:scaleX(1.15)">,</span><span style="display:inline-block;width:8px;text-align:center;transform:scaleX(1.15)">2</span><span style="display:inline-block;width:8px;text-align:center;transform:scaleX(1.15)">9</span><span style="display:inline-block;width:8px;text-align:center;transform:scaleX(1.15)">;</span><span style="display:inline-block;width:8px"></span><span style="display:inline-block;width:8px;text-align:center;transform:scaleX(1.13)">S</span><span style="display:inline-block;width:8px;text-align:center;transform:scaleX(1.13)">h</span><span style="display:inline-block;width:8px;text-align:center;transform:scaleX(1.10)">=</span><span style="display:inline-block;width:8px;text-align:center;transform:scaleX(1.15)">7</span><span style="display:inline-block;width:8px;text-align:center;transform:scaleX(1.15)">4</span><span style="display:inline-block;width:8px;text-align:center;transform:scaleX(1.15)">,</span><span style="display:inline-block;width:8px;text-align:center;transform:scaleX(1.15)">0</span><span style="display:inline-block;width:8px;text-align:center;transform:scaleX(1.15)">7</span></div>
<div style="left:1px;top:114px;white-space:nowrap;line-height:1;font-size:13px;font-family:'Liberation Serif',serif;font-weight:bold;color:#000"><span style="display:inline-block;width:8px;text-align:center;transform:scaleX(0.94)">L</span><span style="display:inline-block;width:8px;text-align:center;transform:scaleX(1.13)">S</span><span style="display:inline-block;width:8px;text-align:center;transform:scaleX(1.10)">=</span><span style="display:inline-block;width:8px;text-align:center;transform:scaleX(1.15)">1</span><span style="display:inline-block;width:8px;text-align:center;transform:scaleX(1.15)">8</span><span style="display:inline-block;width:8px;text-align:center;transform:scaleX(1.15)">4</span><span style="display:inline-block;width:8px;text-align:center;transform:scaleX(1.15)">;</span><span style="display:inline-block;width:8px"></span><span style="display:inline-block;width:8px;text-align:center;transform:scaleX(0.94)">L</span><span style="display:inline-block;width:8px;text-align:center;transform:scaleX(0.81)">G</span><span style="display:inline-block;width:8px;text-align:center;transform:scaleX(1.10)">=</span><span style="display:inline-block;width:8px;text-align:center;transform:scaleX(1.15)">8</span><span style="display:inline-block;width:8px;text-align:center;transform:scaleX(1.15)">2</span><span style="display:inline-block;width:8px;text-align:center;transform:scaleX(1.15)">;</span><span style="display:inline-block;width:8px"></span><span style="display:inline-block;width:8px;text-align:center;transform:scaleX(0.94)">B</span><span style="display:inline-block;width:8px;text-align:center;transform:scaleX(1.15)">r</span><span style="display:inline-block;width:8px;text-align:center;transform:scaleX(1.10)">=</span><span style="display:inline-block;width:8px;text-align:center;transform:scaleX(1.15)">4</span><span style="display:inline-block;width:8px;text-align:center;transform:scaleX(1.15)">3</span><span style="display:inline-block;width:8px;text-align:center;transform:scaleX(1.15)">,</span><span style="display:inline-block;width:8px;text-align:center;transform:scaleX(1.15)">4</span><span style="display:inline-block;width:8px;text-align:center;transform:scaleX(1.15)">8</span><span style="display:inline-block;width:8px;text-align:center;transform:scaleX(1.15)">;</span><span style="display:inline-block;width:8px"></span><span style="display:inline-block;width:8px;text-align:center;transform:scaleX(1.13)">S</span><span style="display:inline-block;width:8px;text-align:center;transform:scaleX(1.13)">h</span><span style="display:inline-block;width:8px;text-align:center;transform:scaleX(1.10)">=</span><span style="display:inline-block;width:8px;text-align:center;transform:scaleX(1.15)">7</span><span style="display:inline-block;width:8px;text-align:center;transform:scaleX(1.15)">8</span><span style="display:inline-block;width:8px;text-align:center;transform:scaleX(1.15)">,</span><span style="display:inline-block;width:8px;text-align:center;transform:scaleX(1.15)">4</span><span style="display:inline-block;width:8px;text-align:center;transform:scaleX(1.15)">3</span></div>
</div>
<div class="" style="left:775px;top:357px;width:17px;height:120px;background:#FDFDF6"></div>
<div style="left:776px;top:358px;width:15px;height:16px;border:1px solid #fff;border-radius:2px;background:linear-gradient(135deg,#DCE4FC,#B9C9F6);box-shadow:0 0 0 0.5px #B0C0E8"><svg style="position:absolute;left:0;top:0" width="15" height="15"><path d="M3.5 9.5L7.5 5.5L11.5 9.5" stroke="#4D6185" stroke-width="2" fill="none"/></svg></div>
<div style="left:776px;top:400px;width:15px;height:9px;border:1px solid #fff;border-radius:2px;background:linear-gradient(135deg,#DCE4FC,#B9C9F6);box-shadow:0 0 0 0.5px #B0C0E8"></div>
<div style="left:776px;top:461px;width:15px;height:16px;border:1px solid #fff;border-radius:2px;background:linear-gradient(135deg,#DCE4FC,#B9C9F6);box-shadow:0 0 0 0.5px #B0C0E8"><svg style="position:absolute;left:0;top:0" width="15" height="15"><path d="M3.5 5.5L7.5 9.5L11.5 5.5" stroke="#4D6185" stroke-width="2" fill="none"/></svg></div>
<div class="" style="left:468px;top:483px;width:184px;height:1px;background:#A8A490"></div>
<div style="left:468px;top:484px;width:184px;height:17px;background-image:repeating-conic-gradient(#ECE9D8 0 25%,#fff 0 50%);background-size:2px 2px"></div>
<div class="btn" style="left:468px;top:484px;width:18px;height:17px"><div style="left:6px;top:3px;width:0;height:0;border-top:4px solid transparent;border-bottom:4px solid transparent;border-right:4px solid #000"></div></div>
<div class="btn" style="left:634px;top:484px;width:18px;height:17px"><div style="left:7px;top:3px;width:0;height:0;border-top:4px solid transparent;border-bottom:4px solid transparent;border-left:4px solid #000"></div></div>
<div class="btn" style="left:618px;top:484px;width:17px;height:17px"></div>
<div class="" style="left:468px;top:506px;width:184px;height:1px;background:#A8A490"></div>
<div style="left:468px;top:507px;width:184px;height:17px;background-image:repeating-conic-gradient(#ECE9D8 0 25%,#fff 0 50%);background-size:2px 2px"></div>
<div class="btn" style="left:468px;top:507px;width:18px;height:17px"><div style="left:6px;top:3px;width:0;height:0;border-top:4px solid transparent;border-bottom:4px solid transparent;border-right:4px solid #000"></div></div>
<div class="btn" style="left:634px;top:507px;width:18px;height:17px"><div style="left:7px;top:3px;width:0;height:0;border-top:4px solid transparent;border-bottom:4px solid transparent;border-left:4px solid #000"></div></div>
<div class="btn" style="left:552px;top:507px;width:17px;height:17px"></div>
<div class="" style="left:468px;top:535px;width:184px;height:1px;background:#A8A490"></div>
<div style="left:468px;top:536px;width:184px;height:17px;background-image:repeating-conic-gradient(#ECE9D8 0 25%,#fff 0 50%);background-size:2px 2px"></div>
<div class="btn" style="left:468px;top:536px;width:18px;height:17px"><div style="left:6px;top:3px;width:0;height:0;border-top:4px solid transparent;border-bottom:4px solid transparent;border-right:4px solid #000"></div></div>
<div class="btn" style="left:634px;top:536px;width:18px;height:17px"><div style="left:7px;top:3px;width:0;height:0;border-top:4px solid transparent;border-bottom:4px solid transparent;border-left:4px solid #000"></div></div>
<div class="btn" style="left:486px;top:536px;width:17px;height:17px"></div>
<div class="sunk edit" style="left:660px;top:483px;width:50px;height:19px"></div>
<div class="t" style="left:663px;top:486px;font-size:14px;-webkit-text-stroke:0.45px #000;letter-spacing:0.5px">17</div>
<div class="t" style="left:717px;top:485px;font-size:14px;-webkit-text-stroke:0.5px #000;letter-spacing:0.9px">Symbols</div>
<div class="sunk edit" style="left:660px;top:506px;width:50px;height:19px"></div>
<div class="t" style="left:663px;top:509px;font-size:14px;-webkit-text-stroke:0.45px #000;letter-spacing:0.5px">0</div>
<div class="t" style="left:717px;top:508px;font-size:14px;-webkit-text-stroke:0.5px #000;letter-spacing:0.7px">Shift Freq</div>
<div class="sunk edit" style="left:660px;top:535px;width:50px;height:19px"></div>
<div class="t" style="left:663px;top:538px;font-size:14px;-webkit-text-stroke:0.45px #000;letter-spacing:0.5px">1</div>
<div class="t" style="left:717px;top:537px;font-size:14px;-webkit-text-stroke:0.5px #000;letter-spacing:1.0px">Scale FFT</div>
<div class="t" style="left:668px;top:597px;font-size:14px;color:#000;font-weight:bold">400</div>
<div class="btn" style="left:713px;top:591px;width:71px;height:27px"></div>
<div class="t" style="left:737px;top:597px;font-size:15px;-webkit-text-stroke:0.4px #000;letter-spacing:0.3px">Go!</div>
<div class="" style="left:2px;top:624px;width:792px;height:19px;background:#ECE9D8"></div>
<div class="" style="left:2px;top:626px;width:792px;height:1px;background:#A8A490"></div>
<div class="" style="left:2px;top:643px;width:792px;height:1px;background:#fff"></div>
<div class="t" style="left:4px;top:629px;font-size:13px;font-weight:bold;letter-spacing:0.4px">[TempDir] Q15(0).wav</div>
<svg style="position:absolute;left:778px;top:628px" width="16" height="15"><path d="M15 3L3 15M15 7L7 15M15 11L11 15" stroke="#fff" stroke-width="1"/><path d="M15 4L4 15M15 8L8 15M15 12L12 15" stroke="#A8A490" stroke-width="1.2"/></svg>
<svg style="position:absolute;left:0;top:0" width="798" height="647">
<rect x="6" y="323" width="56" height="23" rx="10" fill="none" stroke="#f00" stroke-width="2"/>
<rect x="373" y="320" width="48" height="30" rx="9" fill="none" stroke="#f00" stroke-width="2"/>
<rect x="620" y="481" width="85" height="25" rx="10" fill="none" stroke="#f00" stroke-width="2"/>
<line x1="428" y1="350.3" x2="615" y2="482.8" stroke="#f00" stroke-width="2.2"/>
<path d="M421.5 345.6L427.6 355.6L432.8 348Z" fill="#f00"/>
<path d="M621.5 487.4L610.2 485L615.4 477.4Z" fill="#f00"/>
</svg>
</body></html>
